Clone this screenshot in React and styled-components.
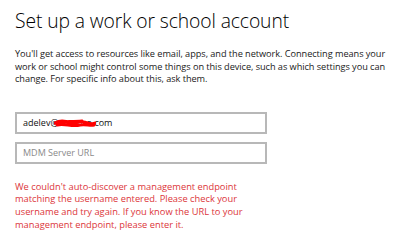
import React from 'react';
import styled, { createGlobalStyle } from 'styled-components';

const GlobalStyle = createGlobalStyle`
  html, body {
    margin: 0;
    padding: 0;
    background: #ffffff;
  }
  body {
    font-family: "Open Sans", "Noto Sans", sans-serif;
    color: #000;
  }
`;

const Page = styled.div`
  width: 399px;
  height: 240px;
  box-sizing: border-box;
  padding: 9px 0 0 15px;
  overflow: hidden;
`;

const Title = styled.h1`
  margin: 0;
  font-size: 19.3px;
  font-weight: 300;
  line-height: 24px;
  color: #000;
  letter-spacing: -0.1px;
`;

const Intro = styled.p`
  margin: 15px 0 0;
  width: 384px;
  font-size: 9.2px;
  line-height: 12.6px;
  letter-spacing: -0.05px;
  color: #1a1a1a;
`;

const Fields = styled.div`
  display: flex;
  flex-direction: column;
  gap: 8px;
  margin-top: 26px;
  width: 252px;
`;

const Field = styled.div`
  position: relative;
  height: 22px;
  box-sizing: border-box;
  border: 2px solid #b8b8b8;
  display: flex;
  align-items: center;
  padding-left: 6px;
  font-size: 9px;
  color: ${p => (p.$placeholder ? '#8a8a8a' : '#111')};
`;

const Redaction = styled.svg`
  position: absolute;
  left: 37px;
  top: 3px;
`;

const ErrorText = styled.p`
  margin: 17px 0 0;
  width: 250px;
  font-size: 9.3px;
  line-height: 12.7px;
  color: #dc3539;
`;

export default function App() {
  return (
    <>
      <GlobalStyle />
      <Page>
        <Title>Set up a work or school account</Title>
        <Intro>
          You'll get access to resources like email, apps, and the network. Connecting means your
          work or school might control some things on this device, such as which settings you can
          change. For specific info about this, ask them.
        </Intro>
        <Fields>
          <Field>
            adelev@contoso.com
            <Redaction width="42" height="13" viewBox="0 0 42 13">
              <path
                d="M1 6 C6 3 12 4 16 6 C20 8 24 3 30 5 C34 6 38 8 41 6 M3 8 C10 6 18 10 26 8 C32 7 36 9 40 8 M6 5 C12 4 20 5 28 4"
                stroke="#f00"
                strokeWidth="3"
                fill="none"
                strokeLinecap="round"
              />
            </Redaction>
          </Field>
          <Field $placeholder>MDM Server URL</Field>
        </Fields>
        <ErrorText>
          We couldn't auto-discover a management endpoint matching the username entered. Please
          check your username and try again. If you know the URL to your management endpoint,
          please enter it.
        </ErrorText>
      </Page>
    </>
  );
}
